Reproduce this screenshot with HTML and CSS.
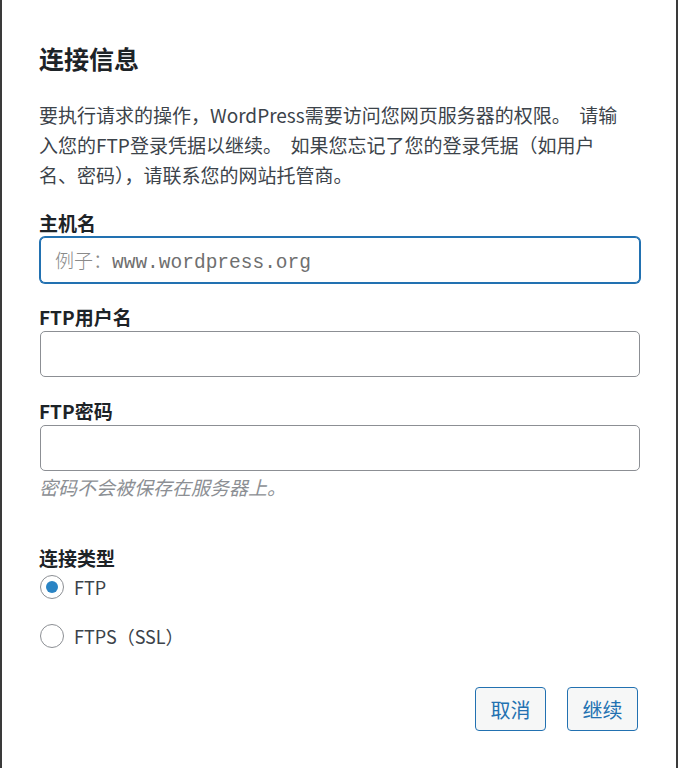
FILE: index.html
```html
<!DOCTYPE html>
<html lang="zh-CN">
<head>
<meta charset="utf-8">
<title>连接信息</title>
<link rel="stylesheet" href="styles.css">
</head>
<body>
<div class="frame">
  <form class="dialog">
    <h2 class="title">连接信息</h2>
    <p class="intro">要执行请求的操作，WordPress需要访问您网页服务器的权限。&nbsp; 请输<br>入您的FTP登录凭据以继续。&nbsp; 如果您忘记了您的登录凭据（如用户<br>名、密码），请联系您的网站托管商。</p>

    <label class="field-label" for="hostname">主机名</label>
    <div class="input focused"><span class="ph"><span class="ph-cjk">例子：</span>www.wordpress.org</span></div>

    <label class="field-label gap" for="username">FTP用户名</label>
    <div class="input"></div>

    <label class="field-label gap" for="password">FTP密码</label>
    <div class="input"></div>
    <p class="hint">密码不会被保存在服务器上。</p>

    <div class="field-label type-label">连接类型</div>
    <div class="radios">
      <div class="radio-row"><span class="radio checked"></span><span class="radio-text">FTP</span></div>
      <div class="radio-row"><span class="radio"></span><span class="radio-text">FTPS（SSL）</span></div>
    </div>

    <div class="actions">
      <span class="btn">取消</span>
      <span class="btn">继续</span>
    </div>
  </form>
</div>
</body>
</html>
```

FILE: styles.css
```css
html, body {
  margin: 0;
  padding: 0;
  background: #ffffff;
}

body {
  font-family: "Noto Sans CJK SC", "Noto Sans", sans-serif;
  color: #3c434a;
}

.frame {
  box-sizing: border-box;
  width: 678px;
  height: 768px;
  border-left: 2px solid #3a3a3a;
  border-right: 2px solid #3a3a3a;
  overflow: hidden;
}

.dialog {
  display: flex;
  flex-direction: column;
  padding: 0 36px 0 37px;
}

.title {
  margin: 42px 0 0;
  font-size: 25px;
  line-height: 32px;
  font-weight: 700;
  color: #1d2327;
}

.intro {
  margin: 26px 0 0;
  font-size: 19px;
  line-height: 30px;
  color: #3c434a;
  white-space: nowrap;
}

.field-label {
  display: block;
  margin-top: 21px;
  font-size: 19px;
  line-height: 24px;
  font-weight: 700;
  color: #1d2327;
}

.field-label.gap {
  margin-top: 22px;
}

.input {
  box-sizing: border-box;
  margin: 2px 0 0 1px;
  width: 600px;
  height: 46px;
  border: 1px solid #8c8f94;
  border-radius: 5px;
  background: #fff;
  display: flex;
  align-items: center;
  padding: 0 14px;
}

.input.focused {
  border-color: #2271b1;
  box-shadow: 0 0 0 1px #2271b1;
}

.ph {
  font-family: "Liberation Mono", "DejaVu Sans Mono", monospace;
  font-size: 19.5px;
  color: #6f6f6f;
  white-space: nowrap;
}

.ph-cjk {
  font-family: "Noto Sans CJK SC", sans-serif;
  font-size: 19px;
  font-weight: 300;
  color: #8a8a8a;
}

.hint {
  margin: 4px 0 0;
  font-size: 19px;
  line-height: 24px;
  font-style: italic;
  color: #8c8f94;
}

.type-label {
  margin-top: 47px;
}

.radios {
  display: flex;
  flex-direction: column;
  gap: 15px;
}

.radio-row {
  height: 34px;
  display: flex;
  align-items: center;
  gap: 10px;
}

.radio {
  box-sizing: border-box;
  width: 24px;
  height: 24px;
  border-radius: 50%;
  border: 1px solid #8c8f94;
  background: #fff;
  display: flex;
  align-items: center;
  justify-content: center;
  margin-left: 1px;
}

.radio.checked::after {
  content: "";
  width: 12px;
  height: 12px;
  border-radius: 50%;
  background: #2a84c4;
}

.radio-text {
  font-size: 18px;
  color: #3c434a;
}

.actions {
  margin-top: 34px;
  display: flex;
  justify-content: flex-end;
  gap: 21px;
  padding-right: 2px;
}

.btn {
  box-sizing: border-box;
  width: 71px;
  height: 44px;
  border: 1px solid #2271b1;
  border-radius: 4px;
  background: #f6f7f7;
  color: #2271b1;
  font-size: 20px;
  display: flex;
  align-items: center;
  justify-content: center;
}
```
